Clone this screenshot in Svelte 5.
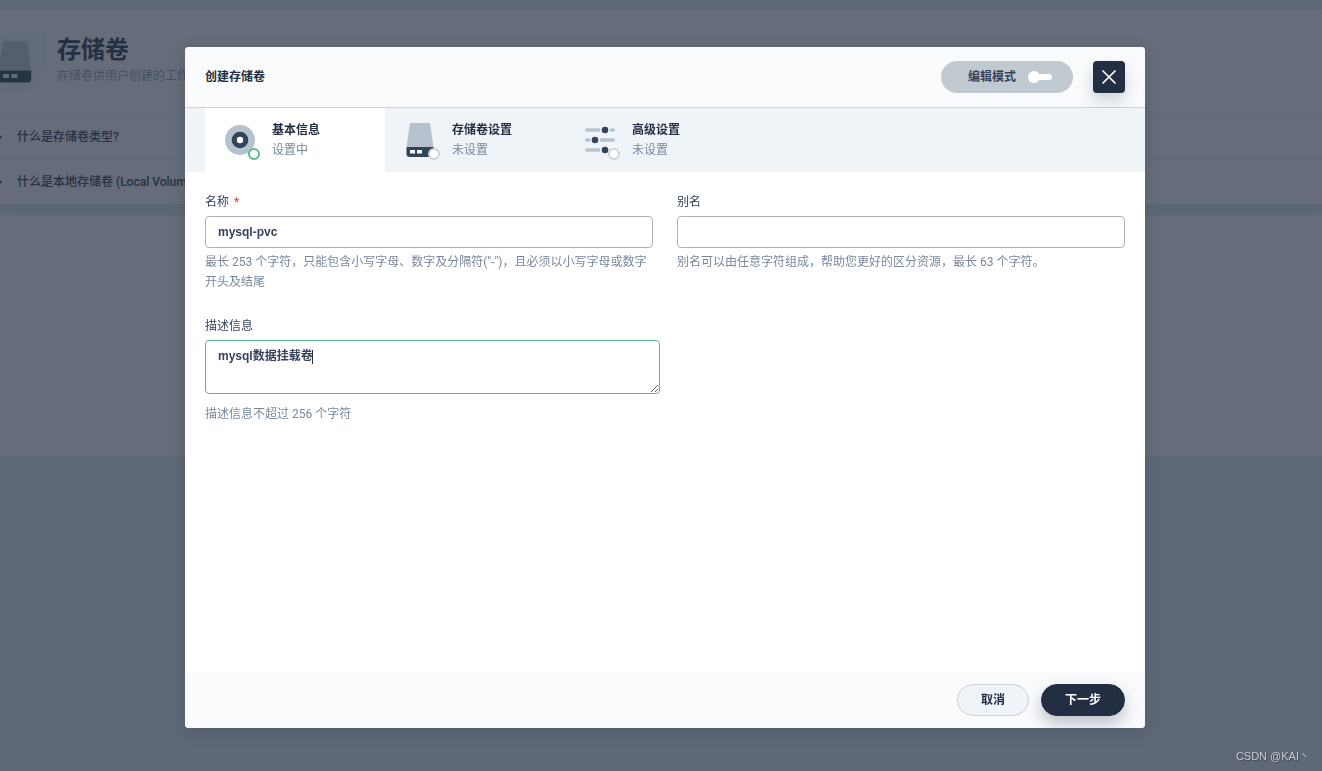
<script>
  let name = $state('mysql-pvc');
  let alias = $state('');
  let description = $state('mysql数据挂载卷');
  let editMode = $state(false);

  const steps = [
    { icon: 'disc', title: '基本信息', status: '设置中', current: true },
    { icon: 'drive', title: '存储卷设置', status: '未设置', current: false },
    { icon: 'sliders', title: '高级设置', status: '未设置', current: false }
  ];

  const questions = ['什么是存储卷类型?', '什么是本地存储卷 (Local Volume)?'];
</script>

{#snippet drive(size, light, dark, slot)}
  <svg width={size} height={size} viewBox="0 0 40 40" aria-hidden="true">
    <path d="M10 3h20l3.5 24h-27z" fill={light} />
    <path d="M6.5 27h27v7a3 3 0 0 1-3 3h-21a3 3 0 0 1-3-3z" fill={dark} />
    <path d="M10 30h5v3.4h-5zM17 30h5v3.4h-5z" fill={slot} />
  </svg>
{/snippet}

<main class="page" inert>
  <section class="card banner">
    <div class="intro">
      <div class="badge">{@render drive(48, '#545e6f', '#263345', '#626c79')}</div>
      <div>
        <h1>存储卷</h1>
        <p>存储卷供用户创建的工作</p>
      </div>
    </div>
    {#each questions as question}
      <div class="question">
        <svg width="6" height="8" viewBox="0 0 6 8" aria-hidden="true"><path d="M2 0l4 4-4 4z" fill="#263042" /></svg>
        <span>{question}</span>
      </div>
    {/each}
  </section>
  <section class="card list"></section>
</main>

<div class="overlay">
  <div class="dialog" role="dialog" aria-modal="true" aria-labelledby="dialog-title">
    <header>
      <h2 id="dialog-title">创建存储卷</h2>
      <button class="mode" type="button" aria-pressed={editMode} onclick={() => (editMode = !editMode)}>
        <span>编辑模式</span>
        <svg width="24" height="12" viewBox="0 0 24 12" aria-hidden="true">
          <rect x="4" y="3" width="20" height="6" rx="3" fill="#fff" />
          <circle cx={editMode ? 18 : 6} cy="6" r="6" fill="#fff" />
        </svg>
      </button>
      <button class="close" type="button" aria-label="关闭">
        <svg width="16" height="16" viewBox="0 0 16 16" aria-hidden="true">
          <path d="M1.5 1.5l13 13M14.5 1.5l-13 13" stroke="#fff" stroke-width="1.7" fill="none" />
        </svg>
      </button>
    </header>

    <nav>
      {#each steps as step}
        <button class="step" class:current={step.current} type="button">
          <span class="icon">
            {#if step.icon === 'disc'}
              <svg width="40" height="40" viewBox="0 0 40 40" aria-hidden="true">
                <circle cx="20" cy="20" r="15" fill="#b6c2cd" />
                <circle cx="20" cy="20" r="8.3" fill="#324558" />
                <circle cx="20" cy="20" r="3.2" fill="#fff" />
              </svg>
            {:else if step.icon === 'drive'}
              {@render drive(40, '#b6c2cd', '#324558', '#fff')}
            {:else}
              <svg width="40" height="40" viewBox="0 0 40 40" aria-hidden="true">
                <g stroke="#b6c2cd" stroke-width="3.4" stroke-linecap="round">
                  <path d="M6.7 10H19M31 10h2.3M6.7 20H9M21 20h12.3M6.7 30H19" />
                </g>
                <g fill="#324558" stroke="#eff4f9" stroke-width="1.6">
                  <circle cx="25" cy="10" r="4.1" />
                  <circle cx="15" cy="20" r="4.1" />
                  <circle cx="25" cy="30" r="4.1" />
                </g>
              </svg>
            {/if}
            <i class="dot"></i>
          </span>
          <span class="caption">
            <strong>{step.title}</strong>
            <span>{step.status}</span>
          </span>
        </button>
      {/each}
    </nav>

    <form>
      <div class="field">
        <label for="name">名称 <span class="required">*</span></label>
        <input id="name" type="text" bind:value={name} />
        <p>最长 253 个字符，只能包含小写字母、数字及分隔符("-")，且必须以小写字母或数字开头及结尾</p>
      </div>
      <div class="field">
        <label for="alias">别名</label>
        <input id="alias" type="text" bind:value={alias} />
        <p>别名可以由任意字符组成，帮助您更好的区分资源，最长 63 个字符。</p>
      </div>
      <div class="field">
        <label for="description">描述信息</label>
        <textarea id="description" bind:value={description}></textarea>
        <p>描述信息不超过 256 个字符</p>
      </div>
    </form>

    <footer>
      <button class="cancel" type="button">取消</button>
      <button class="next" type="button">下一步</button>
    </footer>
  </div>
</div>

<div class="watermark">CSDN @KAI丶</div>

<style>
  :global(body) {
    margin: 0;
    background: #5f6877;
    color: #242e42;
    font: 12px/20px Roboto, 'Noto Sans CJK SC', sans-serif;
  }
  h1, h2, p { margin: 0; }
  button, input, textarea {
    box-sizing: border-box;
    font: inherit;
    color: inherit;
  }
  button { border: 0; cursor: pointer; }
  svg { display: block; flex: none; }

  .page {
    display: grid;
    gap: 12px;
    padding-top: 10px;
    overflow: hidden;
  }
  .card {
    background: #666c79;
    box-shadow: 0 4px 8px rgba(36, 46, 66, 0.06);
  }
  .intro {
    display: flex;
    gap: 12px;
    height: 82px;
    padding-top: 22px;
    margin-left: -15px;
    white-space: nowrap;
  }
  .badge {
    display: grid;
    place-items: center;
    width: 60px;
    height: 60px;
    border-radius: 30px 0 30px 30px;
    background: #626b79;
  }
  .intro h1 {
    margin-top: 2px;
    font-size: 24px;
    line-height: 32px;
    color: #252e42;
  }
  .intro p { color: #465064; }
  .question {
    display: flex;
    align-items: center;
    gap: 15px;
    height: 44px;
    margin-left: -4px;
    border-top: 1px solid #5e6674;
    font-weight: 500;
    color: #263042;
    white-space: nowrap;
  }
  .list { height: 240px; }

  .overlay {
    position: fixed;
    inset: 0;
    display: flex;
    align-items: center;
    justify-content: center;
    padding: 4px 0 0 8px;
  }
  .dialog {
    display: flex;
    flex-direction: column;
    width: 960px;
    max-width: 100%;
    border-radius: 4px;
    background: #fff;
    box-shadow: 0 4px 16px rgba(36, 46, 66, 0.2);
    overflow: hidden;
  }
  header {
    display: flex;
    align-items: center;
    gap: 20px;
    height: 60px;
    padding: 0 20px;
    border-bottom: 1px solid #ccd3db;
    background: #f9fbfd;
  }
  h2 {
    flex: 1;
    font-size: 12px;
    line-height: 20px;
  }
  .mode {
    display: flex;
    align-items: center;
    justify-content: center;
    gap: 12px;
    width: 132px;
    height: 32px;
    padding: 0 16px 0 22px;
    border-radius: 16px;
    background: #c1c9d1;
    color: #36435c;
    font-weight: 700;
  }
  .close {
    display: grid;
    place-items: center;
    width: 32px;
    height: 32px;
    padding: 0;
    border-radius: 4px;
    background: #242e42;
    box-shadow: 0 8px 16px rgba(36, 46, 66, 0.2);
  }

  nav {
    display: flex;
    padding: 0 20px;
    background: #eff4f9;
  }
  .step {
    display: flex;
    gap: 12px;
    width: 180px;
    height: 64px;
    padding: 12px 15px;
    background: none;
    text-align: left;
  }
  .step.current { background: #fff; }
  .icon { position: relative; flex: none; height: 40px; }
  .dot {
    position: absolute;
    right: 0;
    bottom: 0;
    box-sizing: border-box;
    width: 12px;
    height: 12px;
    border: 2px solid #ccd3db;
    border-radius: 50%;
    background: #fff;
  }
  .current .dot { border-color: #55bc8a; }
  .caption { display: grid; align-content: start; }
  .caption span { color: #79879c; }

  form {
    display: grid;
    grid-template-columns: 1fr 1fr;
    align-content: start;
    gap: 24px;
    min-height: 460px;
    padding: 20px;
  }
  .field {
    display: flex;
    flex-direction: column;
    gap: 4px;
    min-width: 0;
    color: #36435c;
  }
  .required { margin-left: 2px; color: #e0403a; }
  .field p { color: #79879c; }
  input, textarea {
    padding: 5px 12px;
    border: 1px solid #abb4be;
    border-radius: 4px;
    outline: 0;
    background: #fff;
    font-family: 'Liberation Sans', 'Noto Sans CJK SC', sans-serif;
    font-weight: 600;
  }
  input { width: 100%; height: 32px; }
  textarea {
    width: 455px;
    height: 54px;
    margin-bottom: 6px;
    border-color: #55bc8a;
    background: linear-gradient(#242e42, #242e42) 106px 9px / 1px 14px no-repeat #fff;
    caret-color: transparent;
    resize: both;
  }

  footer {
    display: flex;
    align-items: center;
    justify-content: flex-end;
    gap: 12px;
    height: 56px;
    padding: 0 20px;
    background: #f9fbfd;
  }
  footer button {
    height: 32px;
    padding: 0 23px;
    border: 1px solid #ccd3db;
    border-radius: 16px;
    background: #eff4f9;
    font-weight: 700;
  }
  footer .next {
    border-color: #242e42;
    background: #242e42;
    color: #fff;
    box-shadow: 0 8px 16px rgba(36, 46, 66, 0.28);
  }

  .watermark {
    position: fixed;
    right: 12px;
    bottom: 5px;
    font-family: 'Liberation Sans', 'Noto Sans CJK SC', sans-serif;
    font-size: 11px;
    color: #c9ccd1;
    text-shadow: 1px 1px 1px #3c4350;
  }
</style>
